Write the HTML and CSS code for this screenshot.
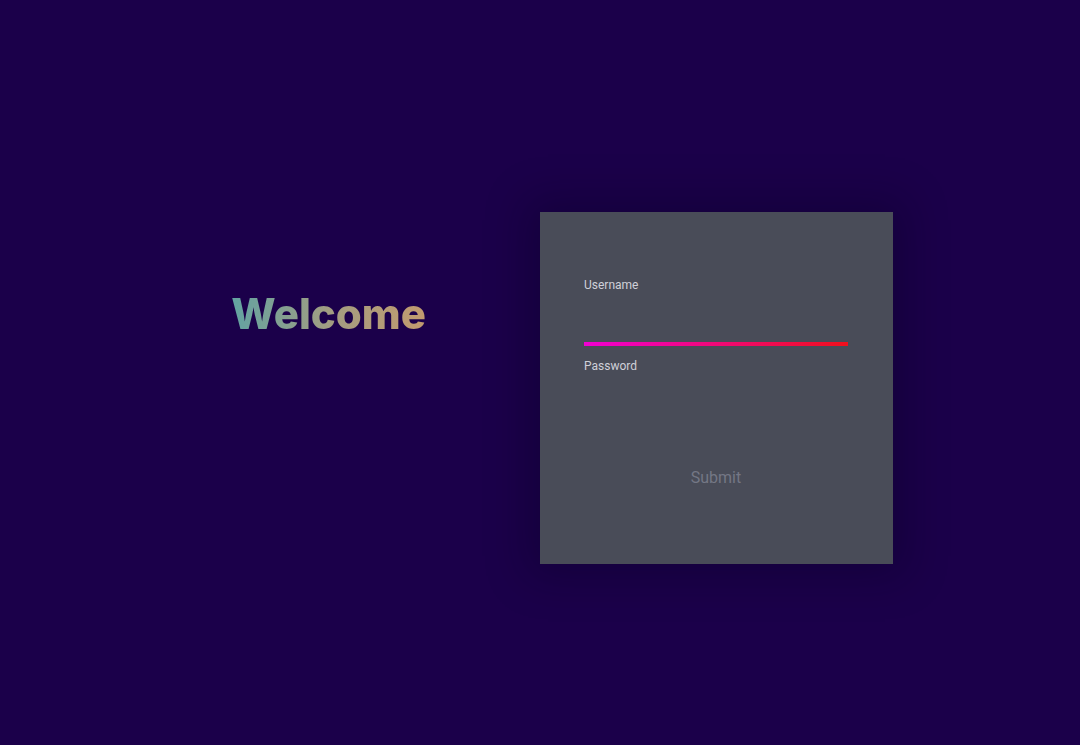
FILE: index.html
```html
<!DOCTYPE html>
<html lang="en">
<head>
<meta charset="utf-8">
<title>Login</title>
<link rel="stylesheet" href="styles.css">
</head>
<body>
<main class="page">
  <section class="intro">
    <h1 class="welcome">Welcome</h1>
  </section>
  <section class="card-col">
    <form class="card">
      <label class="field-label" for="username">Username</label>
      <div class="field field-active">
        <input id="username" class="field-input" type="text">
        <div class="field-bar"></div>
      </div>
      <label class="field-label" for="password">Password</label>
      <div class="field">
        <input id="password" class="field-input" type="password">
      </div>
      <button type="button" class="submit">Submit</button>
    </form>
  </section>
</main>
</body>
</html>
```

FILE: styles.css
```css
html, body {
  margin: 0;
  padding: 0;
  height: 100%;
}
body {
  background: #1b004a;
  font-family: Roboto, "Liberation Sans", sans-serif;
  overflow: hidden;
}
.page {
  display: grid;
  grid-template-columns: 540px 540px;
  height: 745px;
}
.intro {
  display: flex;
  justify-content: flex-end;
  padding-right: 114px;
  padding-top: 290px;
  box-sizing: border-box;
}
.welcome {
  margin: 0;
  font-family: Inter, "Liberation Sans", sans-serif;
  font-weight: 800;
  font-size: 42px;
  line-height: 48px;
  letter-spacing: 0;
  background: linear-gradient(90deg, #62a3a2 0%, #a29d82 50%, #c29b6f 100%);
  -webkit-background-clip: text;
  background-clip: text;
  color: transparent;
  height: 48px;
}
.card-col {
  padding-top: 212px;
}
.card {
  width: 353px;
  height: 352px;
  box-sizing: border-box;
  background: #494c58;
  padding: 66px 45px 0 44px;
  display: flex;
  flex-direction: column;
  box-shadow: 0 0 40px 12px rgba(5, 0, 20, 0.25);
}
.field-label {
  display: block;
  font-size: 12px;
  line-height: 14px;
  color: #cfd0d8;
  height: 14px;
}
.field {
  display: flex;
  flex-direction: column;
  height: 54px;
  margin-bottom: 13px;
}
.field-input {
  flex: 1;
  background: transparent;
  border: 0;
  outline: none;
  color: #e0e0e8;
  font-family: inherit;
  font-size: 14px;
  padding: 0;
}
.field-bar {
  height: 4px;
  background: linear-gradient(90deg, #f000d2 0%, #f00a6e 55%, #f1101c 100%);
}
.submit {
  align-self: center;
  margin-top: 28px;
  background: transparent;
  border: 0;
  padding: 0;
  font-family: Roboto, sans-serif;
  font-size: 16px;
  line-height: 19px;
  color: #747785;
  cursor: pointer;
}
```
